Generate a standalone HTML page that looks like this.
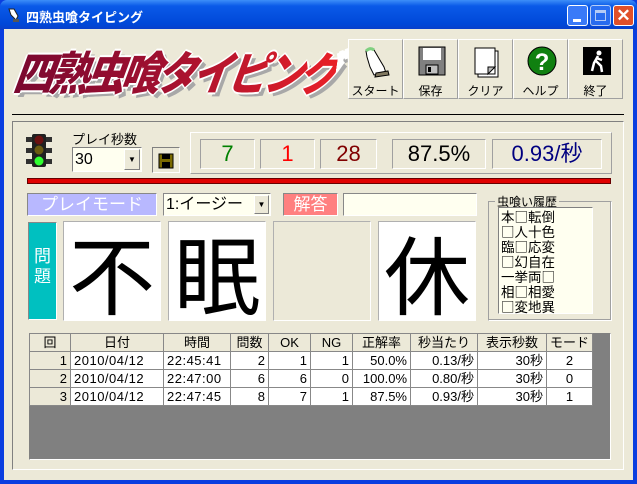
<!DOCTYPE html>
<html><head><meta charset="utf-8">
<style>
*{box-sizing:border-box;margin:0;padding:0}
body{width:637px;height:484px;overflow:hidden;font-family:"Liberation Sans","Noto Sans CJK JP",sans-serif;background:#0a3ee0;position:relative}
.a{position:absolute}
.win{left:4px;top:29px;width:629px;height:451px;background:#ece9d8}
.title{left:0;top:0;width:637px;height:30px;background:linear-gradient(#3d8ef8,#0a5ae8 20%,#0048d8 80%,#0a3ec8);border-radius:7px 7px 0 0}
.sunk{border:1px solid;border-color:#808080 #fff #fff #808080}
.raised{border:1px solid;border-color:#fff #808080 #808080 #fff}
.btn{top:39px;width:55px;height:60px;background:#ece9d8;border:1px solid;border-color:#fff #a0a0a0 #a0a0a0 #fff;text-align:center;font-size:12px;color:#000}
.btn span{position:absolute;left:0;right:0;top:42px}
.btn svg{position:absolute;left:13px;top:5px}
.stat{top:139px;height:30px;border:1px solid;border-color:#a0a0a0 #fff #fff #a0a0a0;font-size:22px;text-align:center;line-height:28px}
.card{top:221px;width:98px;height:100px;background:#fff;border:1px solid;border-color:#b0b0b0 #fff #fff #b0b0b0;font-size:86px;line-height:98px;text-align:center;font-family:"Noto Sans CJK JP",sans-serif}
.logo{left:20px;top:38px;font-size:46px;font-weight:900;font-style:italic;letter-spacing:-5px;transform-origin:0 0;transform:scaleX(.87) skewX(-10deg);white-space:nowrap;font-family:'Noto Sans CJK JP',sans-serif}
table{border-collapse:collapse;font-size:13px;table-layout:fixed}
td{border:1px solid #888;height:18px;line-height:16px;padding:0 3px;text-align:right;background:#fff;white-space:nowrap;overflow:hidden}
tr.h td{background:#ece9d8;text-align:center}
td.f{background:#ece9d8}
td.l{text-align:left;letter-spacing:.5px}
</style></head><body>
<div class="a title"></div>
<svg class="a" style="left:6px;top:7px" width="16" height="16"><path d="M3 2 L8 2 L12 9 L10 13 L5 8 Z" fill="#fff" stroke="#222"/><rect x="7" y="12" width="6" height="3" fill="#555"/></svg>
<div class="a" style="left:26px;top:7px;color:#fff;font-size:13px;font-weight:bold">四熟虫喰タイピング</div>
<div class="a" style="left:567px;top:5px;width:21px;height:21px;background:#3a7af8;border:1px solid #fff;border-radius:3px"><div class="a" style="left:5px;top:13px;width:8px;height:3px;background:#fff"></div></div>
<div class="a" style="left:590px;top:5px;width:21px;height:21px;background:#3a7af8;border:1px solid #fff;border-radius:3px;opacity:.7"><div class="a" style="left:4px;top:4px;width:11px;height:11px;border:1px solid #fff;border-top-width:3px"></div></div>
<div class="a" style="left:613px;top:5px;width:21px;height:21px;background:#e0502a;border:1px solid #fff;border-radius:3px;color:#fff;font-size:17px;line-height:19px;text-align:center;font-weight:bold">✕</div>
<div class="a win"></div>
<!-- logo -->
<div class="a logo" style="left:24px;top:42px;color:#a8a8a8">四熟虫喰タイピング</div>
<div class="a logo" style="color:#fff;text-shadow:2px 0 #fff,-2px 0 #fff,0 2px #fff,0 -2px #fff">四熟虫喰タイピング</div>
<div class="a logo" style="background:linear-gradient(90deg,#7a0830,#a01030 45%,#e82028);-webkit-background-clip:text;color:transparent">四熟虫喰タイピング</div>
<!-- buttons -->
<div class="a btn" style="left:348px"><svg width="30" height="36"><path d="M4 6 Q8 2 12 5 L22 22 L24 28 L12 30 L8 22 L5 12 Z" fill="#fff" stroke="#000"/><path d="M4 6 Q8 2 12 5" stroke="#80d080" stroke-width="3" fill="none"/><path d="M14 28 L26 26 L27 30 L13 32Z" fill="#807860" stroke="#000"/></svg><span>スタート</span></div>
<div class="a btn" style="left:403px"><svg width="30" height="36"><rect x="2" y="2" width="26" height="28" fill="#808080" stroke="#000"/><rect x="6" y="3" width="18" height="12" fill="#fff"/><rect x="9" y="20" width="12" height="9" fill="#c0c0c0" stroke="#000"/><rect x="11" y="22" width="3" height="5" fill="#000"/></svg><span>保存</span></div>
<div class="a btn" style="left:458px"><svg width="30" height="36"><rect x="6" y="6" width="20" height="26" fill="#fff" stroke="#000"/><rect x="3" y="3" width="20" height="26" fill="#fff" stroke="#000"/><path d="M16 29 L23 22 L16 22Z" fill="#bbb" stroke="#000"/></svg><span>クリア</span></div>
<div class="a btn" style="left:513px"><svg width="30" height="36"><circle cx="15" cy="16" r="14" fill="#108010" stroke="#000"/><text x="15" y="25" font-size="24" font-weight="bold" fill="#fff" text-anchor="middle" font-family="Liberation Sans">?</text></svg><span>ヘルプ</span></div>
<div class="a btn" style="left:568px"><svg width="30" height="36"><rect x="1" y="2" width="28" height="28" fill="#000"/><circle cx="17" cy="8" r="2.5" fill="#fff"/><path d="M16 11 L12 18 L10 26 M14 16 L19 21 L20 27 M14 13 L20 15" stroke="#fff" stroke-width="2.5" fill="none"/></svg><span>終了</span></div>
<div class="a" style="left:12px;top:114px;width:612px;height:1px;background:#000"></div>
<!-- group -->
<div class="a sunk" style="left:12px;top:121px;width:612px;height:349px"></div>
<svg class="a" style="left:25px;top:133px" width="28" height="35"><rect x="7" y="1" width="14" height="33" rx="2" fill="#202020"/><path d="M1 4h6v5H1zM21 4h6v5h-6zM1 15h6v5H1zM21 15h6v5h-6zM1 26h6v5H1zM21 26h6v5h-6z" fill="#303030"/><circle cx="14" cy="7" r="4.5" fill="#6a1010"/><circle cx="14" cy="17" r="4.5" fill="#6a5a10"/><circle cx="14" cy="28" r="4.5" fill="#30ff30"/></svg>
<div class="a" style="left:72px;top:129px;font-size:13px">プレイ秒数</div>
<div class="a sunk" style="left:72px;top:147px;width:70px;height:25px;background:#fffff0;font-size:16px;line-height:23px;padding-left:2px">30</div>
<div class="a raised" style="left:124px;top:149px;width:16px;height:21px;background:#ece9d8;font-size:8px;text-align:center;line-height:20px">▼</div>
<div class="a sunk" style="left:152px;top:147px;width:28px;height:26px;background:#ece9d8"><svg style="position:absolute;left:5px;top:5px" width="16" height="16"><rect x="1" y="1" width="14" height="14" fill="#7a6a00" stroke="#000"/><rect x="4" y="1" width="8" height="5" fill="#000"/><rect x="4" y="9" width="8" height="6" fill="#000"/></svg></div>
<div class="a" style="left:190px;top:132px;width:422px;height:42px;border:1px solid;border-color:#fff #a0a0a0 #a0a0a0 #fff"></div>
<div class="a stat" style="left:200px;width:55px;color:#008000">7</div>
<div class="a stat" style="left:260px;width:55px;color:#ff0000">1</div>
<div class="a stat" style="left:320px;width:57px;color:#800000">28</div>
<div class="a stat" style="left:392px;width:94px;color:#000">87.5%</div>
<div class="a stat" style="left:492px;width:110px;color:#000080">0.93/秒</div>
<div class="a" style="left:27px;top:178px;width:584px;height:6px;background:#e00000;border:1px solid #600"></div>
<!-- mode row -->
<div class="a" style="left:27px;top:193px;width:130px;height:23px;background:#b8b8ff;color:#fff;font-size:17px;line-height:22px;text-align:center;border:1px solid;border-color:#888 #fff #fff #888">プレイモード</div>
<div class="a" style="left:163px;top:193px;width:108px;height:23px;background:#fffff0;border:1px solid;border-color:#888 #fff #fff #888;font-size:16px;line-height:21px;padding-left:2px">1:イージー</div>
<div class="a raised" style="left:254px;top:195px;width:15px;height:19px;background:#ece9d8;font-size:8px;text-align:center;line-height:18px">▼</div>
<div class="a" style="left:283px;top:193px;width:55px;height:23px;background:#ff8080;color:#fff;font-size:17px;line-height:22px;text-align:center;border:1px solid;border-color:#888 #fff #fff #888">解答</div>
<div class="a" style="left:343px;top:193px;width:134px;height:23px;background:#fffff0;border:1px solid;border-color:#888 #fff #fff #888"></div>
<div class="a" style="left:28px;top:222px;width:29px;height:98px;background:#00c0c0;color:#fff;font-size:17px;text-align:center;padding-top:24px;line-height:20px;border:1px solid;border-color:#888 #fff #fff #888">問<br>題</div>
<div class="a card" style="left:63px">不</div>
<div class="a card" style="left:168px">眠</div>
<div class="a card" style="left:273px;background:#ece9d8"></div>
<div class="a card" style="left:378px">休</div>
<!-- history -->
<div class="a" style="left:488px;top:201px;width:124px;height:120px;border:1px solid;border-color:#a0a0a0 #fff #fff #a0a0a0;box-shadow:inset -1px -1px #a0a0a0"></div>
<div class="a" style="left:495px;top:193px;font-size:12px;background:#ece9d8;padding:0 2px">虫喰い履歴</div>
<div class="a" style="left:498px;top:207px;width:95px;height:107px;background:#fffff0;border:1px solid;border-color:#808080 #fff #fff #808080;font-size:13.5px;line-height:15px;padding:1px 2px;font-family:'Noto Sans CJK JP',sans-serif">本□転倒<br>□人十色<br>臨□応変<br>□幻自在<br>一挙両□<br>相□相愛<br>□変地異</div>
<!-- table -->
<div class="a" style="left:29px;top:333px;width:582px;height:127px;background:#808080;border:1px solid;border-color:#808080 #fff #fff #808080"></div>
<table class="a" style="left:29px;top:333px;width:563px">
<colgroup><col style="width:41px"><col style="width:93px"><col style="width:67px"><col style="width:38px"><col style="width:42px"><col style="width:42px"><col style="width:58px"><col style="width:67px"><col style="width:69px"><col style="width:46px"></colgroup>
<tr class="h"><td>回</td><td>日付</td><td>時間</td><td>問数</td><td>OK</td><td>NG</td><td>正解率</td><td>秒当たり</td><td>表示秒数</td><td>モード</td></tr>
<tr><td class="f">1</td><td class="l">2010/04/12</td><td class="l">22:45:41</td><td>2</td><td>1</td><td>1</td><td>50.0%</td><td>0.13/秒</td><td>30秒</td><td style="text-align:center">2</td></tr>
<tr><td class="f">2</td><td class="l">2010/04/12</td><td class="l">22:47:00</td><td>6</td><td>6</td><td>0</td><td>100.0%</td><td>0.80/秒</td><td>30秒</td><td style="text-align:center">0</td></tr>
<tr><td class="f">3</td><td class="l">2010/04/12</td><td class="l">22:47:45</td><td>8</td><td>7</td><td>1</td><td>87.5%</td><td>0.93/秒</td><td>30秒</td><td style="text-align:center">1</td></tr>
</table>
</body></html>
